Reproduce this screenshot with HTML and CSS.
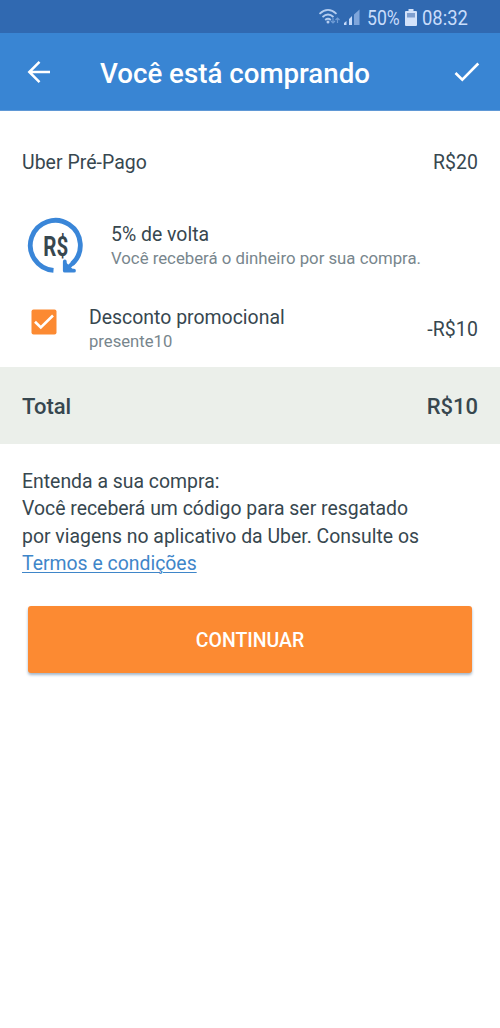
FILE: index.html
```html
<!DOCTYPE html>
<html lang="pt-BR">
<head>
<meta charset="utf-8">
<title>Você está comprando</title>
<link rel="stylesheet" href="styles.css">
</head>
<body>
<div class="status">
  <svg class="signals" width="44" height="20" viewBox="0 0 44 20">
    <g fill="none" stroke="#b4cdf0" stroke-width="1.8">
      <path d="M.5 6.800Q9-1 17.500 6.800"/><path d="M3.500 10Q9 5 14.500 10"/><path d="M6.200 13Q9 10.600 11.800 13"/>
    </g>
    <circle cx="9" cy="15" r="1.500" fill="#b4cdf0"/>
    <path d="M14 11v5m-2-2 2 2 2-2M18.500 16v-5m-2 2 2-2 2 2" fill="none" stroke="#6f9bd4" stroke-width="1.200"/>
    <path d="M25 18v-2l2.500-2v4zM30 18v-6l3-3v9z" fill="#c5dafa"/>
    <path d="M35 18V7.500l5.500-5V18z" fill="#7ea5db"/>
  </svg>
  <span class="percent"><span>50%</span></span>
  <svg class="battery" width="12" height="18" viewBox="0 0 12 18">
    <path d="M3.500 0h5v2H11a1 1 0 0 1 1 1v13a1 1 0 0 1-1 1H1a1 1 0 0 1-1-1V3a1 1 0 0 1 1-1h2.500z" fill="#d3e2fa"/>
    <path d="M2 4h8v4.500H2z" fill="#7f9fcf"/>
  </svg>
  <span class="clock"><span>08:32</span></span>
</div>
<header class="appbar">
  <svg class="back" width="24" height="24" viewBox="0 0 24 24"><path d="M23 12H2.500M12.500 1.800 2.300 12l10.200 10.200" fill="none" stroke="#fff" stroke-width="2.500"/></svg>
  <h1 class="title">Você está comprando</h1>
  <svg class="done" width="26" height="20" viewBox="0 0 26 20"><path d="M1.500 11l6.800 6.700L24.300 1.500" fill="none" stroke="#fff" stroke-width="2.600"/></svg>
</header>
<main>
  <div class="row product"><span>Uber Pré-Pago</span><span>R$20</span></div>
  <div class="row cashback">
    <svg class="coin" width="56" height="58" viewBox="0 0 56 58">
      <path d="M25.500 53.300A25 25 0 1 1 44 47" fill="none" stroke="#3a86d8" stroke-width="4.800"/>
      <path d="M36.200 43.500v10.500H46.500z" fill="#3a86d8"/>
      <path d="M36.800 44.500v9.200h9.200M37.500 53 45.500 45.500" fill="none" stroke="#3a86d8" stroke-width="3.800" stroke-linecap="round" stroke-linejoin="round"/>
      <text x="15.300" y="38.500" textLength="25" lengthAdjust="spacingAndGlyphs" class="coin-label">R$</text>
    </svg>
    <div><div class="name">5% de volta</div><div class="note">Você receberá o dinheiro por sua compra.</div></div>
  </div>
  <div class="row discount">
    <svg class="checkbox" width="26" height="26" viewBox="0 0 26 26"><rect x=".5" y=".5" width="25" height="25" rx="2" fill="#fc8a32"/><path d="M4 12.800l5.800 5.700L22 6.500" fill="none" stroke="#fff" stroke-width="2.600"/></svg>
    <div class="coupon"><div class="name">Desconto promocional</div><div class="note">presente10</div></div>
    <span class="amount">-R$10</span>
  </div>
  <div class="row total"><span>Total</span><span>R$10</span></div>
  <p class="terms">Entenda a sua compra:<br>Você receberá um código para ser resgatado<br>por viagens no aplicativo da Uber. Consulte os<br><a href="#">Termos e condições</a></p>
  <button class="continue" type="button">CONTINUAR</button>
</main>
</body>
</html>
```
FILE: styles.css
```css
* { box-sizing: border-box; }
body { margin: 0; width: 500px; min-height: 1028px; background: #fff; color: #37474f; font: 19.44px/27.3px Roboto, sans-serif; }
svg { display: block; flex: none; overflow: visible; }
.status { height: 33px; background: #3069b1; color: #c9ddfb; display: flex; align-items: center; padding: 4px 0 0 319px; font-size: 20px; }
.signals { margin-top: -3px; }
.percent, .clock { flex: none; white-space: nowrap; }
.percent { width: 33px; margin-left: 4px; }
.clock { width: 48px; margin-left: 5px; }
.percent span, .clock span { display: inline-block; transform: scaleX(.88); transform-origin: left; }
.clock span { transform: scaleX(.92); }
.battery { margin: -1px 0 0 5px; }
.appbar { height: 78px; background: #3985d3; border-bottom: 1px solid #5f98d6; display: flex; align-items: center; padding: 0 20px 0 27px; color: #fff; }
.title { margin: 4px 0 0 49px; flex: 1; font-size: 27.7px; line-height: 34px; font-weight: 500; white-space: nowrap; }
.row { display: flex; align-items: center; }
.product { justify-content: space-between; padding: 0 22px; height: 102px; padding-top: 1px; letter-spacing: .04px; }
.cashback { padding: 1px 0 0 28px; height: 65px; gap: 27px; }
.coin { margin-top: -1px; }
.cashback .note { font-size: 16.77px; line-height: 23px; }
.name { line-height: 25px; }
.note { font-size: 16.67px; line-height: 24px; color: #78868d; }
.coin-label { font: 700 27px Roboto, sans-serif; fill: #37474f; }
.discount { height: 89px; padding: 14px 22px 0 31px; }
.checkbox { margin-top: -15px; }
.coupon { flex: 1; margin-left: 32px; }
.amount { letter-spacing: .15px; }
.total { justify-content: space-between; padding: 2px 22px 0; height: 77px; background: #ebefea; font-size: 22px; font-weight: 500; }
.terms { margin: 24px 22px 0; white-space: nowrap; font-size: 19.42px; }
.terms a { color: #3f86c9; text-decoration-thickness: 1px; text-underline-offset: 2px; }
.continue { display: block; width: 444px; height: 67px; margin: 29px 0 0 28px; padding-top: 2px; border: 0; border-radius: 3px; background: #fc8a32; color: #fff; font: 500 19.44px Roboto, sans-serif; box-shadow: 0 2px 3px #a3b5c8; }
```
